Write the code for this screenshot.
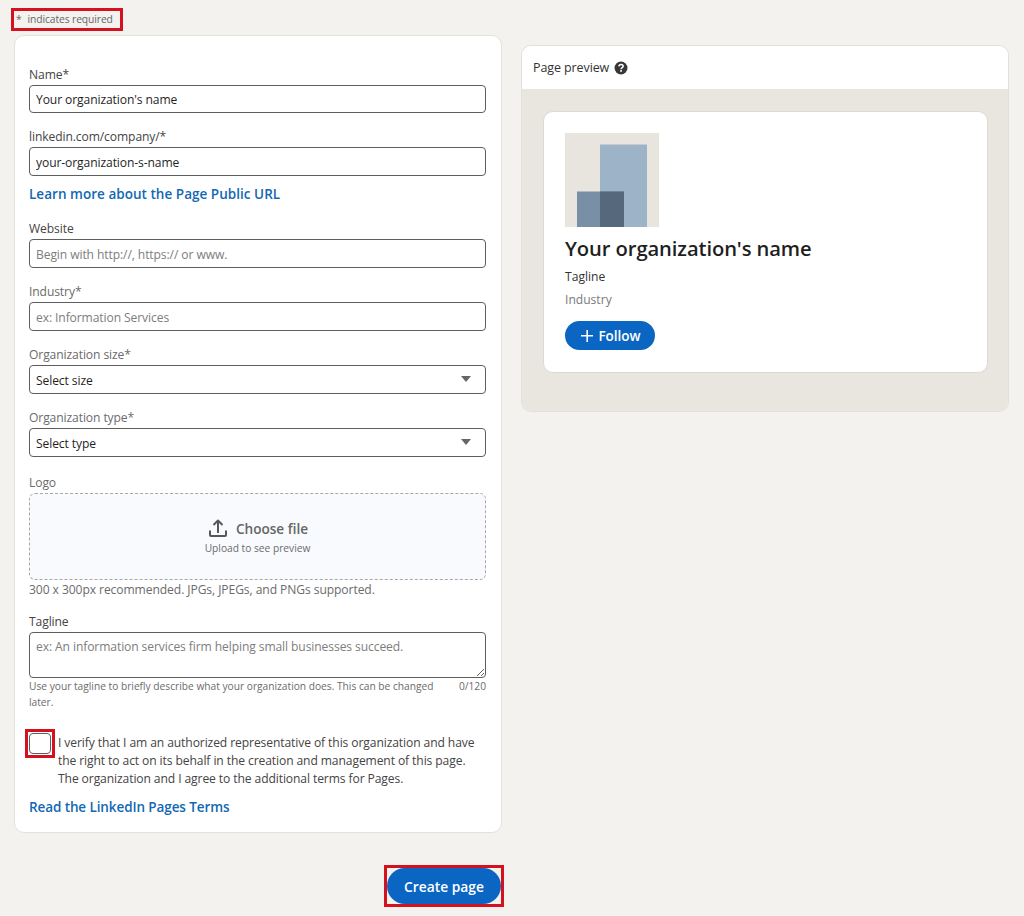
<div class="page">
  <div class="note-row">
    <span class="note"><span class="star">*</span>indicates required</span>
  </div>

  <div class="columns">
    <div class="left">
      <form class="card form">
        <div class="field first">
          <label for="name" class="dark">Name*</label>
          <input id="name" type="text" value="Your organization's name" />
        </div>
        <div class="field">
          <label for="slug" class="dark">linkedin.com/company/*</label>
          <input id="slug" type="text" value="your-organization-s-name" />
        </div>
        <a class="link learn" href="#learn">Learn more about the Page Public URL</a>
        <div class="field">
          <label for="web" class="dark">Website</label>
          <input id="web" type="text" placeholder="Begin with http://, https:// or www." />
        </div>
        <div class="field">
          <label for="industry">Industry*</label>
          <input id="industry" type="text" placeholder="ex: Information Services" />
        </div>
        <div class="field">
          <label for="size">Organization size*</label>
          <div class="select-wrap">
            <select id="size"><option>Select size</option></select>
            <span class="caret"></span>
          </div>
        </div>
        <div class="field type-field">
          <label for="type">Organization type*</label>
          <div class="select-wrap">
            <select id="type"><option>Select type</option></select>
            <span class="caret"></span>
          </div>
        </div>
        <div class="field logo-field">
          <span class="label-text">Logo</span>
          <div class="drop">
            <div class="choose">
              <svg width="24" height="24" viewBox="0 0 24 24" fill="none" stroke="#56575a" stroke-width="2" stroke-linejoin="round" aria-hidden="true">
                <path d="M12 17V5M7.5 9 12 4.5 16.5 9" />
                <path d="M4 14.5V19a1 1 0 0 0 1 1h14a1 1 0 0 0 1-1v-4.5" />
              </svg>
              <span>Choose file</span>
            </div>
            <div class="upload">Upload to see preview</div>
          </div>
          <div class="hint">300 x 300px recommended. JPGs, JPEGs, and PNGs supported.</div>
        </div>
        <div class="field tagline-field">
          <label for="tag" class="dark">Tagline</label>
          <textarea id="tag" placeholder="ex: An information services firm helping small businesses succeed."></textarea>
          <div class="help-row">
            <span class="help">Use your tagline to briefly describe what your organization does. This can be changed later.</span>
            <span class="count">0/120</span>
          </div>
        </div>
        <div class="verify">
          <span class="check-frame"><input class="check" type="checkbox" aria-label="Verify" /></span>
          <p>I verify that I am an authorized representative of this organization and have the right to act on its behalf in the creation and management of this page. The organization and I agree to the additional terms for Pages.</p>
        </div>
        <a class="link terms" href="#terms">Read the LinkedIn Pages Terms</a>
      </form>
      <div class="actions">
        <span class="create-frame"><button class="create" type="button">Create page</button></span>
      </div>
    </div>

    <aside class="preview">
      <div class="preview-head">
        <span>Page preview</span>
        <svg width="14" height="14" viewBox="0 0 14 14" aria-hidden="true">
          <circle cx="7" cy="7" r="6.5" fill="#38383a" />
          <path d="M4.9 5.4C5 4.2 5.9 3.5 7.1 3.5 8.3 3.5 9.2 4.2 9.2 5.3 9.2 6.7 7.2 6.7 7.1 8.2" fill="none" stroke="#fff" stroke-width="1.5" />
          <rect x="6.2" y="9.1" width="1.7" height="1.7" fill="#fff" />
        </svg>
      </div>
      <div class="preview-body">
        <div class="preview-card">
          <svg class="org-logo" width="94" height="94" viewBox="0 0 94 94" aria-hidden="true">
            <rect width="94" height="94" fill="#e8e5de" />
            <rect x="35" y="11.5" width="47" height="82.5" fill="#9db3c8" />
            <rect x="12" y="58.5" width="47" height="35.5" fill="#788fa5" />
            <rect x="35" y="58.5" width="24" height="35.5" fill="#56687b" />
          </svg>
          <div class="org-name">Your organization's name</div>
          <div class="org-tag">Tagline</div>
          <div class="org-ind">Industry</div>
          <button class="follow" type="button">
            <svg width="16" height="16" viewBox="0 0 16 16" aria-hidden="true"><path d="M14 7H9V2H7.4v5H2v1.6h5.4V14H9V8.6h5z" fill="#fff" /></svg>
            Follow
          </button>
        </div>
      </div>
    </aside>
  </div>
</div>

<style>
  :global(body) {
    background: #f4f2ee;
    font-family: "Open Sans", "Noto Sans", sans-serif;
  }
  .page {
    width: 1024px;
    height: 916px;
    overflow: hidden;
    box-sizing: border-box;
    padding: 6px 15px 0 11px;
    color: #1f1f1f;
  }
  .note-row {
    height: 29px;
  }
  .note {
    display: inline-block;
    box-sizing: border-box;
    width: 112px;
    height: 23px;
    border: 3px solid #d3111f;
    font-size: 10.3px;
    line-height: 16px;
    color: #666;
    padding-left: 2px;
    letter-spacing: -0.1px;
    white-space: nowrap;
  }
  .star {
    margin-right: 6px;
  }
  .columns {
    display: grid;
    grid-template-columns: 488px 488px;
    gap: 19px;
    align-items: start;
    padding-left: 3px;
  }
  .card {
    background: #fff;
    border: 1px solid #e3e1dc;
    border-radius: 10px;
    box-sizing: border-box;
  }
  .form {
    height: 798px;
    padding: 29px 15px 0 14px;
    display: flex;
    flex-direction: column;
  }
  .field {
    display: flex;
    flex-direction: column;
    margin-bottom: 14px;
  }
  label,
  .label-text {
    font-size: 12.1px;
    line-height: 20px;
    color: #6b6b6b;
    letter-spacing: -0.1px;
  }
  label.dark {
    color: #444;
  }
  input[type="text"],
  select,
  textarea {
    box-sizing: border-box;
    width: 100%;
    border: 1px solid #5e5e5e;
    border-radius: 4px;
    background: #fff;
    font-family: inherit;
    font-size: 12.1px;
    letter-spacing: -0.1px;
    color: #1f1f1f;
    padding: 1px 6px 0;
    outline: none;
    margin: 0;
  }
  input[type="text"],
  select {
    height: 29px;
  }
  .first input[type="text"] {
    height: 28px;
  }
  select {
    appearance: none;
    display: block;
  }
  input::placeholder,
  textarea::placeholder {
    color: #7d7d7d;
    opacity: 1;
  }
  .select-wrap {
    position: relative;
  }
  .caret {
    position: absolute;
    right: 15px;
    top: 11px;
    border-left: 5.5px solid transparent;
    border-right: 5.5px solid transparent;
    border-top: 6px solid #666;
  }
  .type-field {
    margin-bottom: 16px;
  }
  .link {
    font-size: 13.5px;
    font-weight: 600;
    color: #1268b4;
    text-decoration: none;
    line-height: 20px;
    letter-spacing: -0.1px;
  }
  .learn {
    margin: -6px 0 15px;
    letter-spacing: 0.03px;
  }
  .logo-field {
    margin-bottom: 12px;
  }
  .drop {
    box-sizing: border-box;
    height: 87px;
    border: 1px dashed #a8a8a8;
    border-radius: 6px;
    background: #f8fafd;
    display: flex;
    flex-direction: column;
    align-items: center;
    padding-top: 21px;
  }
  .choose {
    display: flex;
    align-items: center;
    gap: 6px;
    font-size: 13.6px;
    font-weight: 600;
    color: #666;
    height: 26px;
    margin-left: -1px;
  }
  .upload {
    font-size: 10.2px;
    line-height: 14px;
    color: #6b6b6b;
  }
  .hint {
    font-size: 12.1px;
    line-height: 20px;
    color: #6b6b6b;
    letter-spacing: -0.08px;
  }
  textarea {
    display: block;
    height: 46px;
    padding: 5px 6px;
    line-height: 18px;
    resize: vertical;
  }
  .help-row {
    display: flex;
    justify-content: space-between;
    gap: 22px;
  }
  .help,
  .count {
    font-size: 10.2px;
    line-height: 16px;
    color: #6b6b6b;
  }
  .tagline-field {
    margin-bottom: 23px;
  }
  .verify {
    display: flex;
    gap: 7px;
  }
  .check-frame {
    flex: none;
    position: relative;
    width: 22px;
    height: 21px;
  }
  .check-frame::after {
    content: "";
    position: absolute;
    inset: -4px;
    border: 3px solid #d3111f;
  }
  .check {
    appearance: none;
    display: block;
    box-sizing: border-box;
    width: 22px;
    height: 21px;
    margin: 0;
    background: #fff;
    border: 1px solid #5e5e5e;
    border-radius: 4px;
  }
  .verify p {
    margin: 1px 0 0;
    font-size: 12.1px;
    line-height: 18px;
    color: #444;
    letter-spacing: -0.1px;
  }
  .terms {
    margin-top: 9px;
  }
  .actions {
    display: flex;
    justify-content: flex-end;
    margin-top: 35px;
    padding-right: 1px;
  }
  .create-frame {
    position: relative;
    display: block;
    width: 114px;
    height: 36px;
  }
  .create-frame::after {
    content: "";
    position: absolute;
    inset: -3px;
    border: 3px solid #d3111f;
    pointer-events: none;
  }
  .create {
    display: block;
    width: 114px;
    height: 36px;
    border: none;
    border-radius: 18px;
    background: #0a66c2;
    color: #fff;
    font-family: inherit;
    font-size: 13.8px;
    font-weight: 600;
    padding: 0;
  }
  .preview {
    margin-top: 10px;
    border: 1px solid #e3e1dc;
    border-radius: 10px;
    overflow: hidden;
  }
  .preview-head {
    height: 43px;
    background: #fff;
    display: flex;
    align-items: center;
    gap: 5px;
    padding-left: 11px;
    font-size: 12.5px;
    color: #333;
    letter-spacing: -0.1px;
  }
  .preview-body {
    background: #e9e6df;
    padding: 22px 20px 38px 21px;
  }
  .preview-card {
    box-sizing: border-box;
    height: 262px;
    background: #fff;
    border: 1px solid #dcdad4;
    border-radius: 10px;
    padding: 21px 21px 0;
  }
  .org-logo {
    display: block;
  }
  .org-name {
    font-size: 20.2px;
    font-weight: 600;
    line-height: 28px;
    margin-top: 7px;
    color: #1f1f1f;
    letter-spacing: -0.1px;
  }
  .org-tag {
    font-size: 12.1px;
    line-height: 18px;
    margin-top: 6px;
    color: #333;
  }
  .org-ind {
    font-size: 12.1px;
    line-height: 18px;
    margin-top: 5px;
    color: #7a7a7a;
  }
  .follow {
    display: flex;
    align-items: center;
    justify-content: center;
    gap: 3px;
    width: 90px;
    height: 29px;
    margin-top: 12px;
    border: none;
    border-radius: 15px;
    background: #0a66c2;
    color: #fff;
    font-family: inherit;
    font-size: 13.5px;
    font-weight: 600;
    padding: 1px 0 0;
  }
</style>
